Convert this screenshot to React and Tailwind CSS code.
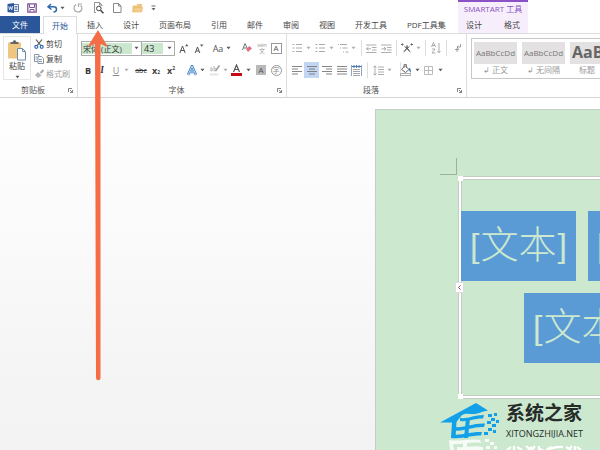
import React from "react";

const svgBase = { fill: "none", stroke: "#666", strokeWidth: 1 };

function Icon({ w = 12, h = 12, className = "", children }) {
  return (
    <svg width={w} height={h} viewBox={`0 0 ${w} ${h}`} className={`block shrink-0 ${className}`} {...svgBase} aria-hidden="true">
      {children}
    </svg>
  );
}

function Caret({ light }) {
  return (
    <svg width="5" height="4" viewBox="0 0 5 4" className="block shrink-0" aria-hidden="true">
      <path d="M0.5 0.8h4L2.5 3.2z" fill={light ? "#aaa" : "#555"} />
    </svg>
  );
}

function Tool({ label, className = "", children }) {
  return (
    <button type="button" aria-label={label} className={`flex h-4 shrink-0 items-center justify-center whitespace-nowrap leading-none ${className}`}>
      {children}
    </button>
  );
}

function Launcher({ label }) {
  return (
    <button type="button" aria-label={label} className="absolute right-1 bottom-1">
      <Icon w={5} h={5}>
        <path d="M0.5 4V0.5H4M2 2l2.5 2.5M4.5 2v2.5H2" stroke="#666" strokeWidth="0.8" />
      </Icon>
    </button>
  );
}

function Group({ label, className, children }) {
  return (
    <section className={`relative flex shrink-0 flex-col border-r border-[#dedede] ${className}`}>
      <div className="h-12 pt-[2px]">{children}</div>
      <h2 className="pt-[3px] pr-[11px] text-center text-[8px] leading-[10px] text-[#555]">{label}</h2>
      <Launcher label={`${label}设置`} />
    </section>
  );
}

function QuickAccess() {
  return (
    <div className="flex h-4 items-center pl-[7px]">
      <Tool label="Word" className="w-3">
        <Icon w={12} h={12}>
          <path d="M6.5 2.5h5v7h-5M7.500 4.500h3M7.500 6h3M7.500 7.500h3" stroke="#2b579a" strokeWidth="0.8" />
          <path d="M0.500 2L7 1v10L0.500 10z" fill="#2b579a" stroke="none" />
          <path d="M1.700 4.300l0.900 3.500 1.100-3.200 1.100 3.200 0.900-3.700" stroke="#fff" strokeWidth="0.8" />
        </Icon>
      </Tool>
      <Tool label="保存" className="ml-2 w-[10px]">
        <Icon w={10} h={10}>
          <path d="M0.800 0.800h8.400v8.400H0.800z" stroke="#80579b" strokeWidth="1.300" />
          <path d="M2.500 1v3.500h5V1M3 9V6.500h4V9" stroke="#80579b" />
        </Icon>
      </Tool>
      <Tool label="撤消" className="ml-[10px] w-[18px] gap-[2px]">
        <Icon w={11} h={10}>
          <path d="M4 1L1 3.800l3.500 2.700M1 3.800h5.500c4 0 4 5 0 5.200" stroke="#2f69b0" strokeWidth="1.500" />
        </Icon>
        <Caret />
      </Tool>
      <Tool label="恢复" className="ml-2 w-[10px]">
        <Icon w={10} h={10}>
          <path d="M3 1.500C-0.500 4 1 9 5 9s5-4.500 2.500-6.500M5.500 4V1h3.500" stroke="#aaa" strokeWidth="1.200" />
        </Icon>
      </Tool>
      <Tool label="打印预览" className="ml-[10px] w-[11px]">
        <Icon w={11} h={12}>
          <path d="M3 10.500H1.500v-10h5L9 3v1M6.500 0.500V3H9" stroke="#777" strokeWidth="0.800" />
          <circle cx="5.800" cy="6.500" r="2.300" stroke="#444" />
          <path d="M7.500 8.200l3 3" stroke="#444" strokeWidth="1.500" />
        </Icon>
      </Tool>
      <Tool label="新建" className="ml-[9px] w-[9px]">
        <Icon w={9} h={10}>
          <path d="M0.500 0.500h5L8 3v6.500H0.500zM5.500 0.500V3H8" stroke="#888" />
        </Icon>
      </Tool>
      <Tool label="打开" className="ml-[10px] w-[11px]">
        <Icon w={11} h={10}>
          <path d="M0.500 9V2.500h4l1-1.500h4.500v8z" fill="#efc681" stroke="none" />
          <path d="M0.500 9l2-4.500h8.300L9.500 9z" fill="#f2cd8c" stroke="#e5b566" strokeWidth="0.600" />
        </Icon>
      </Tool>
      <Tool label="自定义快速访问工具栏" className="ml-2 w-[5px]">
        <Icon w={5} h={6}>
          <path d="M0.500 1h4" stroke="#666" />
          <path d="M0.500 3h4L2.500 5.500z" fill="#666" stroke="none" />
        </Icon>
      </Tool>
    </div>
  );
}

const tabs = ["插入", "设计", "页面布局", "引用", "邮件", "审阅", "视图", "开发工具", "PDF工具集"];

function Header() {
  return (
    <header className="flex shrink-0 border-b border-[#dcdcdc] bg-white">
      <div className="flex w-[458px] shrink-0 flex-col">
        <QuickAccess />
        <nav className="flex h-[17px] text-[8px] leading-[17px] whitespace-nowrap text-[#444]">
          <button type="button" className="w-10 bg-[#2b579a] text-white">文件</button>
          <button type="button" className="-mb-px ml-[3px] w-[34px] border-x border-t border-[#dcdcdc] bg-white leading-4 text-[#2b579a]">开始</button>
          {tabs.map((t) => (
            <button type="button" key={t} className="px-[10px]">{t}</button>
          ))}
        </nav>
      </div>
      <div className="flex w-[70px] shrink-0 flex-col border-t-2 border-[#8a52c4] bg-[#f6eefb] text-[8px] whitespace-nowrap">
        <div className="h-[14px] text-center leading-[14px] text-[#8a52c4]">SMARTART 工具</div>
        <div className="flex h-[17px] justify-between px-2 leading-[17px] text-[#444]">
          <button type="button">设计</button>
          <button type="button">格式</button>
        </div>
      </div>
    </header>
  );
}

function Clipboard() {
  return (
    <Group label="剪贴板" className="w-[78px]">
      <div className="flex gap-[3px] pl-[3px] text-[8px] text-[#444]">
        <button type="button" className="flex h-11 w-7 flex-col items-center border border-[#e6e6e6] pt-[2px] leading-[10px]">
          <Icon w={20} h={22}>
            <path d="M1 3.500h13v16H1z" fill="#efc681" stroke="none" />
            <path d="M3.500 5V3h2.300c0-2.500 3.500-2.500 3.500 0h2.200v2z" fill="#666" stroke="none" />
            <path d="M10.500 9.500h5l3 3v8.500h-8zM15.500 9.500v3h3" fill="#fff" stroke="#6f8ca8" />
          </Icon>
          粘贴
          <span className="mt-1"><Caret /></span>
        </button>
        <div className="flex flex-col">
          <button type="button" className="flex h-[15px] items-center gap-[2px] whitespace-nowrap">
            <Icon w={10} h={10}>
              <path d="M2 0.500l4.800 6M8 0.500l-4.800 6" stroke="#555" strokeWidth="1.200" />
              <circle cx="2.300" cy="7.800" r="1.500" stroke="#2f69b0" strokeWidth="1.200" />
              <circle cx="7.700" cy="7.800" r="1.500" stroke="#2f69b0" strokeWidth="1.200" />
            </Icon>
            剪切
          </button>
          <button type="button" className="flex h-[15px] items-center gap-[2px] whitespace-nowrap">
            <Icon w={10} h={10}>
              <path d="M4 7.500H0.500v-7h4.500v2M1.500 3h2M1.500 5h2" stroke="#6c7f92" strokeWidth="0.800" />
              <path d="M4 2.500h3.500l2 2v5H4zM5 5.500h3M5 7.500h3" stroke="#6c7f92" strokeWidth="0.800" fill="#fff" />
            </Icon>
            复制
          </button>
          <button type="button" className="flex h-[15px] items-center gap-[2px] whitespace-nowrap text-[#a0a0a0]">
            <Icon w={10} h={10}>
              <path d="M9.500 1L6.500 4" stroke="#aaa" strokeWidth="2" />
              <path d="M4 3l3.500 3.500L4 9 1 6z" fill="#b5b5b5" stroke="none" />
            </Icon>
            格式刷
          </button>
        </div>
      </div>
    </Group>
  );
}

function FontGroup() {
  return (
    <Group label="字体" className="w-[209px]">
      <div className="flex flex-col gap-[6px] pt-1 pl-[3px] text-[#555]">
        <div className="flex h-4 items-center">
          <label className="flex h-[15px] w-[61px] items-center justify-between border border-[#ababab] bg-white pr-[2px]">
            <input aria-label="字体" defaultValue="宋体 (正文)" className="h-[11px] w-[50px] bg-[#cbe8cf] pl-px text-[8px] leading-none text-[#333] outline-none" />
            <Caret />
          </label>
          <label className="-ml-px flex h-[15px] w-[34px] items-center justify-between border border-[#ababab] bg-white pr-[2px]">
            <input aria-label="字号" defaultValue="43" className="h-[11px] w-[21px] bg-[#cbe8cf] pl-[2px] text-[9px] leading-none text-[#333] outline-none" />
            <Caret />
          </label>
          <Tool label="增大字号" className="ml-1 w-[10px]">
            <Icon w={10} h={11}><path d="M0.800 10L3.500 3l2.700 7M1.800 7.500h3.500" stroke="#555" /><path d="M6 3.200L7.700 1l1.700 2.200z" fill="#555" stroke="none" /></Icon>
          </Tool>
          <Tool label="减小字号" className="ml-[5px] w-[10px]">
            <Icon w={10} h={11}><path d="M1.200 10L3.500 4l2.300 6M2 8h3" stroke="#555" /><path d="M6 1.500h3.400L7.700 3.700z" fill="#555" stroke="none" /></Icon>
          </Tool>
          <Tool label="更改大小写" className="ml-2 w-[20px] gap-[3px] text-[9px]">Aa<Caret /></Tool>
          <Tool label="清除格式" className="ml-[9px] w-3">
            <Icon w={10} h={10}>
              <path d="M0.500 7l2.500-6.500L5.500 6M1.500 5h3" stroke="#777" />
              <path d="M4 6l3.500-3 2.500 2.500-4 3.500z" fill="#dd7187" stroke="none" />
            </Icon>
          </Tool>
          <Tool label="拼音指南" className="ml-[3px] w-3 flex-col text-[5px] text-[#999]">wén<span className="text-[6px]">文</span></Tool>
          <Tool label="字符边框" className="ml-[2px] w-[12px] text-[8px]"><span className="flex h-[11px] w-[11px] items-center justify-center border border-[#999]">A</span></Tool>
        </div>
        <div className="flex h-4 items-center text-[9px]">
          <Tool label="加粗" className="ml-[2px] w-[10px] font-bold text-[#333]">B</Tool>
          <Tool label="倾斜" className="ml-1 w-[10px] font-serif italic font-bold text-[#333]">I</Tool>
          <Tool label="下划线" className="ml-1 w-5 gap-[5px] text-[#888]"><span className="underline">U</span><Caret light /></Tool>
          <Tool label="删除线" className="ml-[3px] w-[14px] text-[7px] text-[#333] line-through">abc</Tool>
          <Tool label="下标" className="ml-[2px] w-[12px] font-bold text-[#444]">x<span className="pt-1 text-[5px]">2</span></Tool>
          <Tool label="上标" className="ml-[3px] w-[12px] font-bold text-[#444]">x<span className="pb-1 text-[5px]">2</span></Tool>
          <Tool label="文本效果" className="ml-[10px] w-[18px] gap-[3px]">
            <Icon w={10} h={11}>
              <path d="M1 10L5 1l4 9M2.800 7h4.400" stroke="#4585c8" strokeWidth="2.600" />
              <path d="M1 10L5 1l4 9M2.800 7h4.400" stroke="#fff" strokeWidth="0.700" />
            </Icon>
            <Caret />
          </Tool>
          <Tool label="突出显示" className="ml-1 w-[19px] gap-[3px]">
            <Icon w={11} h={12}>
              <path d="M1 4.500c2-2 3 0 2 2.500-3 0-2-2 0-2M5 2v5c3 0 3-3 0-3" stroke="#aaa" strokeWidth="0.800" />
              <path d="M10.500 1.500L6.500 7" stroke="#999" strokeWidth="1.500" />
              <path d="M0.500 9.500h9v2h-9z" fill="#e5e5e5" stroke="none" />
            </Icon>
            <Caret light />
          </Tool>
          <Tool label="字体颜色" className="ml-[3px] w-[20px] gap-1">
            <Icon w={11} h={12}>
              <path d="M2.500 8l3-7 3 7M3.500 5.500h4" stroke="#555" strokeWidth="1.200" />
              <path d="M0 9h11v3H0z" fill="#c80812" stroke="none" />
            </Icon>
            <Caret />
          </Tool>
          <Tool label="字符底纹" className="ml-[5px] w-[10px]"><span className="flex h-[10px] w-[10px] items-center justify-center bg-[#b9b9b9] text-[8px]">A</span></Tool>
          <Tool label="带圈字符" className="ml-[4px] w-[12px] text-[#888]"><span className="flex h-[11px] w-[11px] items-center justify-center rounded-full border border-[#999] text-[7px]">字</span></Tool>
        </div>
      </div>
    </Group>
  );
}

function ListIcon({ kind }) {
  const d = kind === "levels" ? "M1 1.500h1M3 1.500h7M3 5h1M5.500 5h5M6 9h1M8.500 9h3" : "M0.500 1.500h2M4 1.500h6M0.500 5h2M4 5h6M0.500 8.500h2M4 8.500h6";
  return <Icon w={12} h={10}><path d={d} stroke="#aaa" /></Icon>;
}

function AlignIcon({ kind }) {
  const paths = {
    left: "M0 1.500h10M0 4h6M0 6.500h10M0 9h6",
    center: "M0 1.500h10M2 4h6M0 6.500h10M2 9h6",
    right: "M0 1.500h10M4 4h6M0 6.500h10M4 9h6",
    full: "M0 1.500h10M0 4h10M0 6.500h10M0 9h10",
  };
  return <Icon w={10} h={10}><path d={paths[kind]} stroke="#777" strokeWidth="0.900" /></Icon>;
}

function Rule() {
  return <span className="h-4 w-px shrink-0 bg-[#dedede]" />;
}

function Paragraph() {
  return (
    <Group label="段落" className="w-[180px]">
      <div className="flex flex-col gap-[6px] pt-1 pl-[5px]">
        <div className="flex h-4 items-center">
          <Tool label="项目符号" className="w-[18px] gap-[2px]"><ListIcon /><Caret light /></Tool>
          <Tool label="编号" className="ml-[5px] w-[18px] gap-[2px]"><ListIcon /><Caret light /></Tool>
          <Tool label="多级列表" className="ml-1 w-[18px] gap-[2px]"><ListIcon kind="levels" /><Caret light /></Tool>
          <span className="w-[6px]" /><Rule />
          <Tool label="减少缩进" className="ml-1 w-[11px]"><Icon w={11} h={9}><path d="M0 1h10.500M6 3.500h4.500M6 6h4.500M0 8.500h10.500M5 4.800H0.500M2.500 3L0.500 4.800l2 1.700" stroke="#999" strokeWidth="0.800" /></Icon></Tool>
          <Tool label="增加缩进" className="ml-1 w-[11px]"><Icon w={11} h={9}><path d="M0 1h10.500M6 3.500h4.500M6 6h4.500M0 8.500h10.500M5 4.800H0.500M3 3l2 1.800-2 1.700" stroke="#999" strokeWidth="0.800" /></Icon></Tool>
          <span className="w-1" /><Rule />
          <Tool label="中文版式" className="ml-1 w-[19px] gap-[3px]"><Icon w={12} h={10}><path d="M0 1.500h2.500M9.500 1.500H12M1.500 0.500v2M10.500 0.500v2M2.500 9c2-1 3.500-3 3.500-6.500 0 3.500 1.500 5.500 3.500 6.500M3.500 3.500l5 4M8.500 3.500l-5 4" stroke="#555" strokeWidth="0.900" /></Icon><Caret light /></Tool>
          <span className="w-[5px]" /><Rule />
          <Tool label="排序" className="ml-[5px] w-[10px]"><Icon w={10} h={12}><path d="M0.500 5l2-4.500 2 4.500M1 3.500h3M1 7h3l-3 4h3.500M8 1v9.500M6.500 9L8 10.800 9.500 9" stroke="#999" strokeWidth="0.800" /></Icon></Tool>
          <span className="w-[5px]" /><Rule />
          <Tool label="显示编辑标记" className="ml-[7px] w-2"><Icon w={8} h={10}><path d="M6.500 1v3H3M4.500 2.500L3 4l1.500 1.500M1 6.500h4M3 5v4" stroke="#888" strokeWidth="0.800" /></Icon></Tool>
        </div>
        <div className="flex h-4 items-center">
          <Tool label="左对齐" className="w-[10px]"><AlignIcon kind="left" /></Tool>
          <Tool label="居中" className="ml-[2px] w-[15px] bg-[#c2d5f2]"><AlignIcon kind="center" /></Tool>
          <Tool label="右对齐" className="ml-[3px] w-[10px]"><AlignIcon kind="right" /></Tool>
          <Tool label="两端对齐" className="ml-[5px] w-[10px]"><AlignIcon kind="full" /></Tool>
          <Tool label="分散对齐" className="ml-1 w-[11px]"><Icon w={11} h={11}><path d="M0.500 0v11M10.500 0v11" stroke="#8aa6c2" /><path d="M1 1.500h9M3 0v3M5.500 0v3M8 0v3" stroke="#4a7bab" /><path d="M2 4.500h7M2 6.500h7M2 8.500h7M2 10.500h7" stroke="#999" strokeWidth="0.900" /></Icon></Tool>
          <span className="w-[5px]" /><Rule />
          <Tool label="行距" className="ml-[5px] w-[18px] gap-[3px]"><Icon w={11} h={11}><path d="M2 1v9M0.500 2.500L2 0.800l1.500 1.700M0.500 8.500L2 10.200l1.500-1.700M5 2h6M5 4.500h6M5 7h6M5 9.500h6" stroke="#999" strokeWidth="0.800" /></Icon><Caret light /></Tool>
          <span className="w-[9px]" /><Rule />
          <Tool label="底纹" className="w-[18px] gap-[3px]"><Icon w={12} h={12}><path d="M5 1.500l4 4L5.500 8.500l-4-3z" fill="#fff" stroke="#666" /><path d="M4 4V0.500h2.500V4" stroke="#666" strokeWidth="0.800" /><path d="M9 4c2 0 2 3 1.500 5L9 6z" fill="#3474ad" stroke="none" /><path d="M0.500 9.500h10v2h-10z" fill="#fff" stroke="#888" strokeWidth="0.700" /></Icon><Caret /></Tool>
          <Tool label="边框" className="ml-[5px] w-[18px] gap-[5px]"><Icon w={9} h={9}><path d="M0.500 0.500h8v8h-8zM4.500 0.500v8M0.500 4.500h8" stroke="#bbb" /></Icon><Caret /></Tool>
        </div>
      </div>
    </Group>
  );
}

function Styles() {
  return (
    <section aria-label="样式" className="min-w-0 flex-1 overflow-hidden pt-1 pl-1">
      <div className="flex h-[41px] w-[200px] gap-[5px] border border-[#c8c8c8] bg-white pt-[3px] pl-[2px] text-[#999]">
        {["正文", "无间隔"].map((name) => (
          <button type="button" key={name} className="flex w-[43px] shrink-0 flex-col">
            <span className="h-[22px] w-full bg-[#e3e1e1] text-center text-[8px] leading-[22px] text-[#777]">AaBbCcDd</span>
            <span className="w-full text-center text-[8px] leading-3 whitespace-nowrap">↲ {name}</span>
          </button>
        ))}
        <button type="button" className="flex w-[43px] shrink-0 flex-col overflow-hidden">
          <span className="h-[22px] w-full bg-[#e3e1e1] pl-[2px] text-left text-[16px] leading-[20px] font-bold text-[#666]">AaBb</span>
          <span className="w-full pl-[9px] text-left text-[8px] leading-3">标题</span>
        </button>
      </div>
    </section>
  );
}

function Shape({ className }) {
  return (
    <div className={`absolute flex h-[70px] w-[115px] items-center justify-center bg-[#5b9bd5] pb-[3px] font-['Liberation_Sans','Noto_Sans_CJK_SC',sans-serif] text-[34px] leading-none whitespace-nowrap text-[#cce8cf] ${className}`}>
      [<span className="px-px text-[38px] font-light">文本</span>]
    </div>
  );
}

function Frame() {
  return (
    <div className="absolute top-[66px] -right-4 left-[82px] h-[223px] border border-[#c6cbc6] bg-white p-[2px]">
      <div className="h-full border border-[#c6cbc6] bg-[#cce8cf]" />
      <span className="absolute -top-px -left-px h-[5px] w-[5px] bg-white" />
      <span className="absolute -bottom-px -left-px h-[5px] w-[5px] bg-white" />
      <button type="button" aria-label="展开文本窗格" className="absolute top-[105px] -left-1 flex h-[11px] w-[9px] items-center justify-center border border-[#ddd] bg-white">
        <Icon w={5} h={5}><path d="M3.500 0.500L1.500 2.500l2 2" stroke="#884466" /></Icon>
      </button>
    </div>
  );
}

function HouseLogo() {
  return (
    <svg width="60" height="50" viewBox="0 0 60 50" className="block shrink-0" aria-hidden="true">
      <g fill="#12a0e8">
        <path d="M0 22.500L36 3l12 7.500c-7 1-9 3.500-15 3.500-5 0-7-1-11 1L16 22.500z" />
        <path d="M12 22h4.500l-1 16H11z" />
        <path d="M20 18c9 1 13-3 24-3l-1 3.500C33 18.500 29 22 20 21z" />
        <path d="M14 27c12 1 18-4 31-3.500l-1 3.500c-12-0.500-18 4.500-30 3.500z" />
        <path d="M26 18h4l-2 20h-4z" />
        <path d="M12 34.500c12 1 18-3 30-2.500l-1 3.500c-11 0-17 3.500-30 2.500z" />
        <path d="M48 14h4v3h-4zM54 13h3v3h-3zM51 18h4v3h-4zM56 20h3v3h-3zM47 21h4v3h-4zM52 24h4v3h-4zM48 28h4v3h-4zM44 32h4v3h-4zM53 30h3v3h-3z" />
      </g>
      <g fill="#fff" opacity="0.850">
        <path d="M9 40c12 2 19-2 31 0l1 3c-12-1.500-18 2-28 1l1 6h-4z" />
        <path d="M23 42h4v8h-4zM17 47c9 1 15-2 26 0v3H17z" />
        <path d="M45 39h4v3h-4zM50 42h4v3h-4zM46 46h4v3h-4zM54 46h3v3h-3z" />
      </g>
    </svg>
  );
}

function Watermark() {
  return (
    <div className="absolute right-3 bottom-0 flex h-[50px] w-[148px] gap-[6px] overflow-hidden">
      <HouseLogo />
      <div className="whitespace-nowrap text-[#262b28]">
        <div className="text-[19px] leading-[27px] font-bold">系统之家</div>
        <div className="text-[9px] leading-[13px]">XITONGZHIJIA.NET</div>
        <svg width="76" height="6" viewBox="0 0 76 6" className="mt-[5px] block" aria-hidden="true">
          <path d="M1 5l4-3M8 1v5M11 2l5 3M20 1l5 4M22 5l4-3M29 1l-3 4M33 1v3l4 1M40 5c4-1 9-4 17-3M46 2l-5 2M60 2l5 3M66 1l-3 4M69 1v4M71 2l4 3" fill="none" stroke="#fff" strokeWidth="2.200" />
        </svg>
      </div>
    </div>
  );
}

function PointerArrow() {
  return (
    <svg width="24" height="352" viewBox="0 0 24 352" className="pointer-events-none absolute top-[29px] left-[86px]" aria-hidden="true">
      <path d="M12 1l10 17-7.500-3v334a2.200 2.200 0 0 1-4.500 0L9 15l-7.500 3z" fill="#f46d46" />
    </svg>
  );
}

export default function App() {
  return (
    <div className="relative flex min-h-screen flex-col overflow-hidden bg-white font-['Open_Sans','Noto_Sans_CJK_SC',sans-serif]">
      <Header />
      <div className="flex h-16 shrink-0 border-b border-[#d5d5d5] bg-white">
        <Clipboard />
        <FontGroup />
        <Paragraph />
        <Styles />
      </div>
      <main className="flex flex-1 bg-linear-to-b from-white to-[#f2f2f2] pt-[11px] pl-[375px]">
        <div className="relative flex-1 overflow-hidden border-t border-l border-[#c2cfc4] bg-[#cce8cf]">
          <span className="absolute top-12 left-16 h-[17px] w-[17px] border-r border-b border-[#9fb0a2]" />
          <Frame />
          <Shape className="top-[101px] left-[85px]" />
          <Shape className="top-[101px] left-[212px]" />
          <Shape className="top-[183px] left-[148px]" />
          <Watermark />
        </div>
      </main>
      <PointerArrow />
    </div>
  );
}
